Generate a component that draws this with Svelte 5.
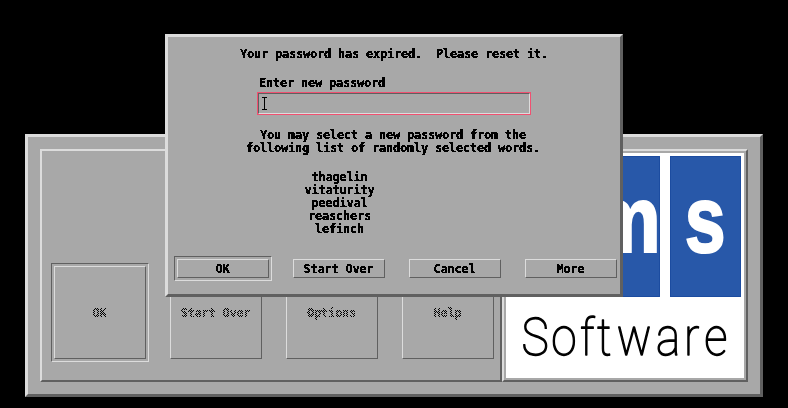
<script>
  const words = ['thagelin', 'vitaturity', 'peedival', 'reaschers', 'lefinch'];
  const actions = ['OK', 'Start Over', 'Cancel', 'More'];
  const disabled = ['OK', 'Start Over', 'Options', 'Help'];
</script>

<div class="desktop">
  <section class="window login">
    <div class="panel controls">
      <div class="row">
        {#each disabled as label, i}
          <div class="ring" class:focus={i === 0}>
            <button class="tall" disabled><span>{label}</span></button>
          </div>
        {/each}
      </div>
    </div>
    <div class="panel brand">
      <svg class="logo" width="238" height="225" viewBox="506 153 238 225">
        <rect x="506" y="153" width="238" height="225" fill="#fff" />
        <rect x="589" y="156" width="71" height="141" fill="#2858a9" />
        <rect x="670.5" y="156.5" width="70" height="140" fill="#2858a9" stroke="#1c4ca0" />
        <path d="M589 156.5H659.5V296.5H589" fill="none" stroke="#1c4ca0" />
        <g fill="#fff" stroke="#fff" stroke-width="2.2" font-family="Liberation Sans" font-weight="700" font-size="94">
          <text transform="translate(589 251.7) scale(.86 1)">m</text>
          <text transform="translate(684.8 252) scale(.78 1)">s</text>
        </g>
        <text class="soft" y="355.5" transform="scale(.9 1)" x="579.5 612.4 644.4 663.4 685.4 728.9 760 782.4">Software</text>
      </svg>
    </div>
  </section>

  <section class="window dialog">
    <p class="notice">Your password has expired.&nbsp; Please reset it.</p>
    <div class="field">
      <label for="pw">Enter new password</label>
      <div class="highlight">
        <div class="input" id="pw">
          <svg width="5" height="13" viewBox="0 0 5 13" shape-rendering="crispEdges">
            <path d="M0 .5H5M2.5 0V13M0 12.5H5" stroke="#000" fill="none" />
          </svg>
        </div>
      </div>
    </div>
    <p class="hint">You may select a new password from the<br />following list of randomly selected words.</p>
    <ul>
      {#each words as word}
        <li>{word}</li>
      {/each}
    </ul>
    <div class="row">
      {#each actions as label, i}
        <div class="ring" class:focus={i === 0}>
          <button><span>{label}</span></button>
        </div>
      {/each}
    </div>
  </section>

  <svg class="defs" width="0" height="0">
    <filter id="crisp" color-interpolation-filters="sRGB" x="0" y="0" width="100%" height="100%">
      <feComponentTransfer><feFuncA type="discrete" tableValues="0 0 0 1 1 1 1 1 1 1" /></feComponentTransfer>
    </filter>
  </svg>
</div>

<style>
  :global(body) { background: #000; overflow: hidden; }
  .desktop {
    --hi: #dcdcdc;
    --lo: #606060;
    position: relative;
    width: 788px;
    height: 408px;
    background: #000;
    color: #000;
    font: bold 12px/13px "DejaVu Sans Mono", monospace;
    letter-spacing: -0.224px;
  }
  .desktop * { box-sizing: border-box; }
  .defs { position: absolute; }
  .window {
    position: absolute;
    background: #a8a8a8;
    border: 3px solid;
    border-color: var(--hi) var(--lo) var(--lo) var(--hi);
  }
  .login {
    left: 25px;
    top: 134px;
    width: 738px;
    height: 263px;
    padding: 12px;
    display: flex;
  }
  .panel {
    height: 233px;
    border: 2px solid;
    border-color: var(--hi) var(--lo) var(--lo) var(--hi);
  }
  .controls { width: 462px; padding: 112px 0 0 9px; }
  .brand { width: 246px; padding: 2px; }
  .logo { display: block; letter-spacing: 0; }
  .soft {
    font: 100 51px Roboto, sans-serif;
    fill: #000;
    stroke: #000;
    stroke-width: 1.3px;
    stroke-linejoin: round;
  }
  .row { display: flex; gap: 18px; }
  .ring { padding: 2px; border: 1px solid transparent; }
  .ring.focus { border-color: var(--lo) var(--hi) var(--hi) var(--lo); }
  button {
    display: block;
    width: 92px;
    height: 19px;
    padding: 1px 0 0;
    border: 1px solid;
    border-color: var(--hi) var(--lo) var(--lo) var(--hi);
    background: none;
    color: #000;
    font: inherit;
    letter-spacing: inherit;
    text-align: center;
  }
  button span { display: block; height: 13px; margin-right: 1px; }
  .notice, .hint, label, li, button span { filter: url(#crisp); }
  .tall { height: 93px; }
  .tall span {
    color: transparent;
    background: repeating-conic-gradient(#000 0 25%, transparent 0 50%) 0 0 / 2px 2px;
    -webkit-background-clip: text;
    background-clip: text;
  }
  .dialog {
    left: 165px;
    top: 34px;
    width: 458px;
    height: 263px;
    padding: 11px 0 0 6px;
  }
  p { margin: 0; white-space: nowrap; }
  .notice { width: 308px; margin-left: 66px; }
  .field { margin: 16px 0 0 83px; }
  label { display: block; width: 130px; margin-left: 2px; }
  .highlight {
    width: 274px;
    height: 23px;
    margin-top: 2px;
    border: 1px solid #f05070;
  }
  .input {
    height: 21px;
    padding: 3px 0 0 3px;
    border: 1px solid;
    border-color: var(--lo) var(--hi) var(--hi) var(--lo);
  }
  .input svg { display: block; }
  .hint { width: 294px; margin: 14px 0 0 72px; text-align: center; }
  ul { width: 71px; margin: 16px 0 0 130px; padding: 0; list-style: none; text-align: center; }
  li { height: 13px; }
  .dialog .row { margin-top: 20px; }
</style>
